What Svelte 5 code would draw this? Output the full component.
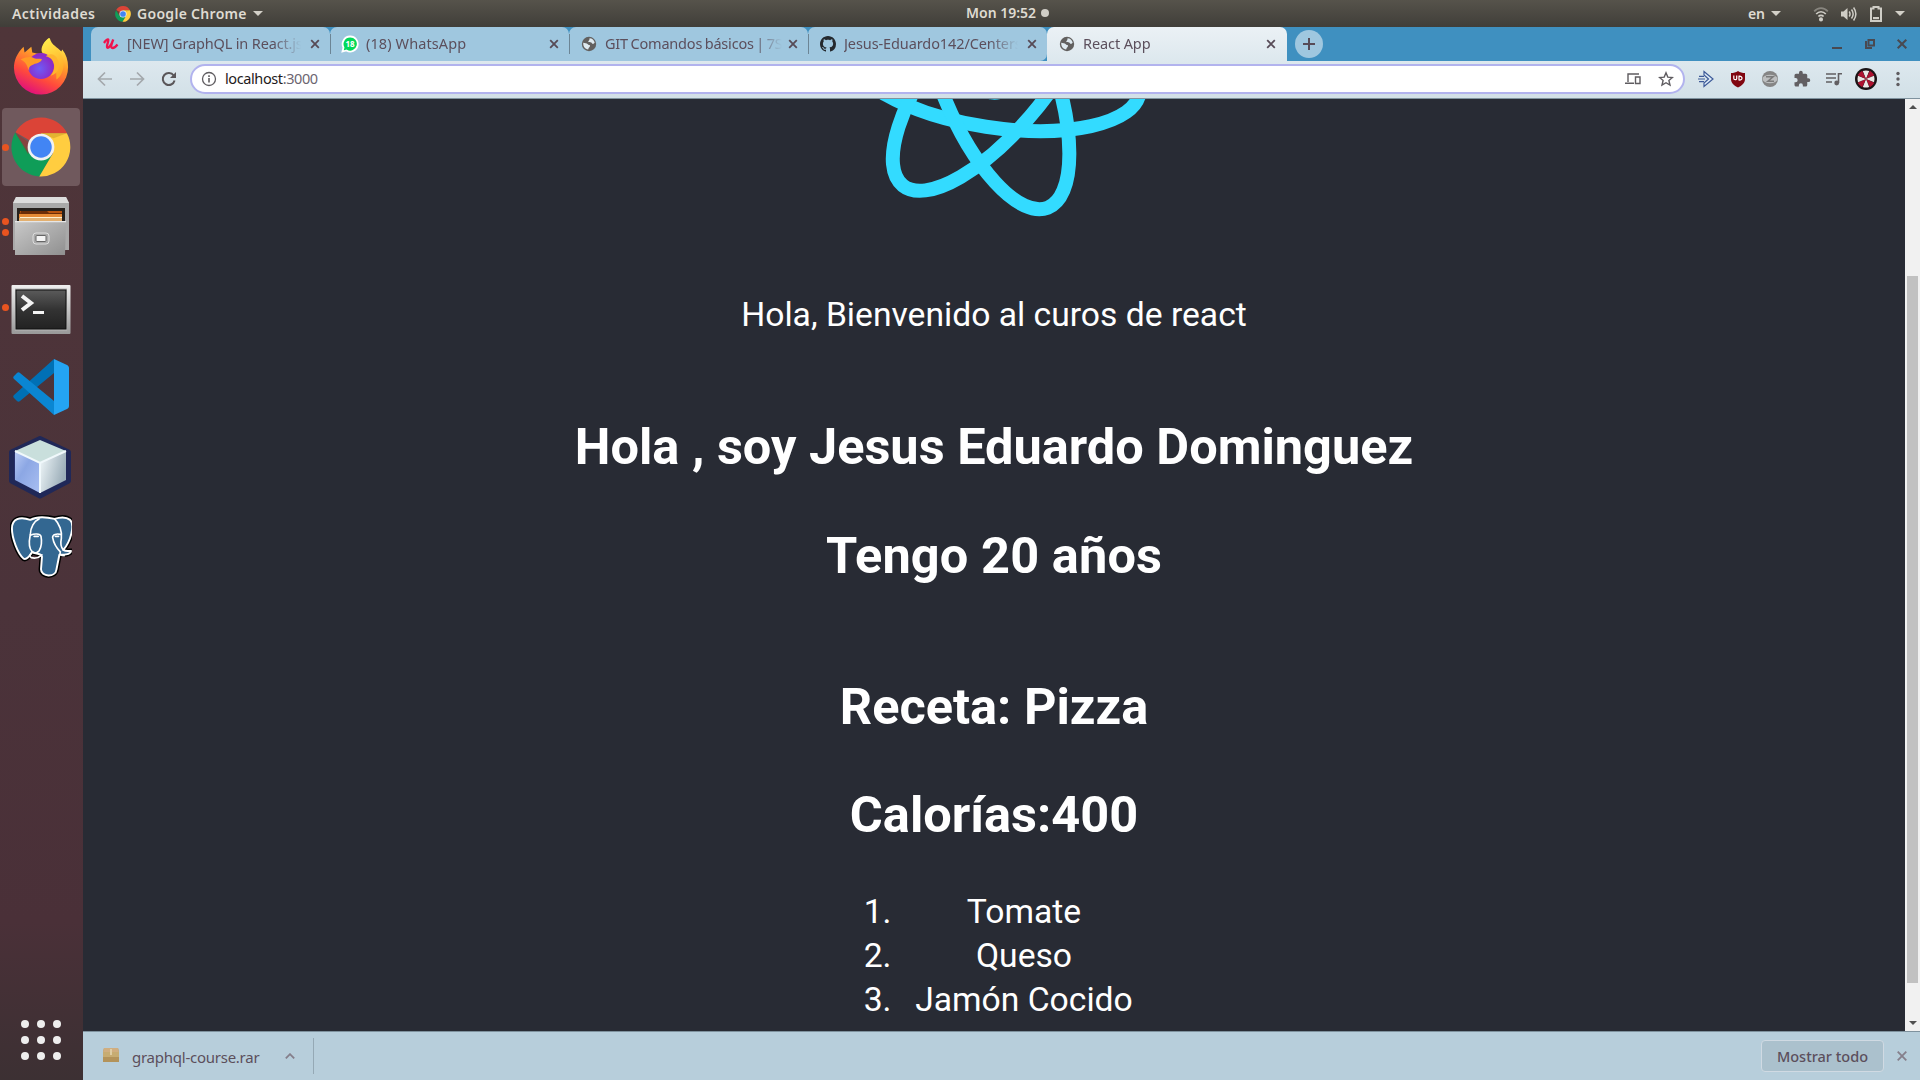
<script>
  const tabs = [
    { id: 'udemy', title: '[NEW] GraphQL in React.js', kind: 'udemy' },
    { id: 'wa', title: '(18) WhatsApp', kind: 'whatsapp' },
    { id: 'git', title: 'GIT Comandos básicos | 7Sabores', kind: 'globe' },
    { id: 'gh', title: 'Jesus-Eduardo142/Centers', kind: 'github' },
    { id: 'react', title: 'React App', kind: 'globe', active: true }
  ];
  const dock = [
    { name: 'firefox', dots: 0 },
    { name: 'chrome', dots: 1, current: true },
    { name: 'files', dots: 2 },
    { name: 'terminal', dots: 1 },
    { name: 'code', dots: 0 },
    { name: 'cube', dots: 0 },
    { name: 'postgres', dots: 0 }
  ];
  const ingredients = ['Tomate', 'Queso', 'Jamón Cocido'];
</script>

{#snippet chrome()}
  <path d="M24 24 3.6 12.2A23.5 23.5 0 0 1 44.9 13H24z" fill="#db4437" />
  <path d="M3.4 12.4A23.5 23.5 0 0 0 23 47.5l10-17.8L14.5 29z" fill="#0f9d58" />
  <path d="M44.7 13A23.5 23.5 0 0 1 22.6 47.5L33.6 29 24 13z" fill="#ffcd40" />
  <path d="M24 13h20.7L34 17z" fill="#c99b22" opacity=".5" />
  <path d="m3.4 12.4 10.2 17.4 1.6-9z" fill="#9e2e24" opacity=".5" />
  <circle cx="24" cy="24" r="10.7" fill="#f1f1f1" />
  <circle cx="24" cy="24" r="8.6" fill="#4285f4" />
{/snippet}

<div class="desktop">
  <header class="topbar">
    <span class="act">Actividades</span>
    <svg class="mini" viewBox="0 0 48 48">{@render chrome()}</svg>
    <span class="app">Google Chrome</span>
    <i class="tri"></i>
    <span class="clock">Mon 19:52<i></i></span>
    <div class="status">
      <span class="lang">en</span><i class="tri"></i>
      <svg class="wifi" width="16" height="16" viewBox="0 0 16 16" fill="none" stroke="#cfcdc6" stroke-width="1.7">
        <path d="M1.2 5.4C5 1 11 1 14.8 5.4" opacity=".45" /><path d="M3.2 8c2.8-3 6.800-3 9.600 0M5.400 10.500c1.500-1.600 3.700-1.600 5.200 0" />
        <circle cx="8" cy="13.4" r="1.2" fill="#cfcdc6" />
      </svg>
      <svg class="vol" width="17" height="16" viewBox="0 0 17 16" fill="none" stroke="#cfcdc6" stroke-width="1.5">
        <path d="M1 5.5h2.500L7.500 2v12L3.500 10.500H1z" fill="#cfcdc6" stroke="none" />
        <path d="M9.200 5.500c1 1.500 1 3.500 0 5M11.500 3.500c2 2.700 2 6.300 0 9M13.600 1.500c2.800 4 2.800 9 0 13" />
      </svg>
      <svg class="bat" width="14" height="18" viewBox="0 0 14 18"><path d="M2 3.500h2.500V2h5v1.500H12v12.500H2z" fill="none" stroke="#cfcdc6" stroke-width="2" /><path d="M4 12h6v2.200H4z" fill="#cfcdc6" /></svg>
      <i class="tri last"></i>
    </div>
  </header>

  <div class="body">
    <nav class="dock">
      {#each dock as d (d.name)}
        <div class="cell {d.name}" class:current={d.current}>
          {#if d.dots}<span class="run">{#each Array(d.dots) as _}<i></i>{/each}</span>{/if}
          {#if d.name === 'firefox'}
            <svg width="58" height="60" viewBox="0 0 60 60">
              <defs>
                <linearGradient id="ff" x1=".8" y1=".05" x2=".35" y2="1"><stop offset="0" stop-color="#fff44f" /><stop offset=".35" stop-color="#ffa02a" /><stop offset=".7" stop-color="#ff4a3c" /><stop offset="1" stop-color="#e0107c" /></linearGradient>
                <linearGradient id="ffy" x1="0" y1="0" x2=".3" y2="1"><stop offset="0" stop-color="#fff44f" /><stop offset="1" stop-color="#ffa726" /></linearGradient>
                <radialGradient id="ffp" cx=".45" cy=".6"><stop offset="0" stop-color="#6e5cf5" /><stop offset="1" stop-color="#8b2bc9" /></radialGradient>
              </defs>
              <path d="M2 32C2 24 5 17 12 10l1 6 7-6 1 6c5 1 8 2 11 1-2-6 2-13 7-16 2 8 8 9 12 14l1-2c4 5 6 11 6 18a28 28 0 0 1-56 1z" fill="url(#ff)" />
              <path d="M31 16c-2-6 3-12 7-15 2 8 9 9 12 16 7 11 2 23-4 27 0-12-1-24-15-28z" fill="url(#ffy)" />
              <circle cx="30" cy="30" r="13.500" fill="url(#ffp)" />
              <path d="M9 23c7-3 11-3 14-1 2 1 6 0 8 1-1 4-7 4-10 6-3 1-4 3-3 6-3-4-1-7-9-12z" fill="#ff9b26" />
              <path d="M35 20c10 2 11 14 5 20 9-2 11-12 6-19-3-4-8-4-11-1z" fill="#ffb52e" />
            </svg>
          {:else if d.name === 'chrome'}
            <svg width="60" height="60" viewBox="0 0 48 48">{@render chrome()}</svg>
          {:else if d.name === 'files'}
            <svg width="60" height="60" viewBox="0 0 60 60">
              <defs><linearGradient id="fl" x2="1" y2="1"><stop offset="0" stop-color="#c9c9c9" /><stop offset="1" stop-color="#8f8f8f" /></linearGradient></defs>
              <path d="M5 0h50l3 6v47H2V6z" fill="#a9a9a9" /><path d="M5 0h50l3 6H2z" fill="#dcdcdc" />
              <path d="M6 11h48v14H6z" fill="#26211d" />
              <path d="M9 14h42v10H8z" fill="#b9540f" /><path d="M10 14h26l2 2h13v1H9z" fill="#6b2c07" /><path d="M8 17h43v4H8z" fill="#e58a35" /><path d="M9 20h42v1H9z" fill="#fff0d0" /><path d="M8 21h43v3H8z" fill="#e3b070" />
              <path d="M4 24h51l-1 34H4z" fill="url(#fl)" /><path d="M4 24h51v1.200H4z" fill="#e6e6e6" />
              <rect x="22" y="36" width="16" height="11" rx="3" fill="#aaa" stroke="#ddd" /><rect x="25" y="38.500" width="10" height="6" rx="1" fill="#f4f4f4" stroke="#666" />
            </svg>
          {:else if d.name === 'terminal'}
            <svg width="60" height="60" viewBox="0 0 60 60">
              <defs><linearGradient id="tm" x2="0" y2="1"><stop offset="0" stop-color="#5b5b5b" /><stop offset=".5" stop-color="#333" /><stop offset="1" stop-color="#222" /></linearGradient><linearGradient id="tf" x2="0" y2="1"><stop offset="0" stop-color="#efefef" /><stop offset="1" stop-color="#999" /></linearGradient></defs>
              <rect x=".5" y="5" width="59" height="49" rx="1" fill="url(#tf)" /><rect x="4" y="8.500" width="52" height="42" fill="#b5b5b5" /><rect x="5" y="10" width="50" height="39" fill="url(#tm)" stroke="#111" />
              <path d="m11 16 9 7-9 7" fill="none" stroke="#f4f4f4" stroke-width="4" /><path d="M22 31h11v3H22z" fill="#f4f4f4" />
            </svg>
          {:else if d.name === 'code'}
            <svg width="60" height="60" viewBox="0 0 60 60">
              <path d="M43 2v14L9 44c-1 1-2 1-3 0l-3-3c-1-1-1-2 0-3z" fill="#0070b5" />
              <path d="M43 58V44L9 16c-1-1-2-1-3 0l-3 3c-1 1-1 2 0 3z" fill="#0a86d2" />
              <path d="m43 2 13 6c1 .5 2 1.500 2 3v38c0 1.500-1 2.500-2 3l-13 6z" fill="#24a4f3" />
            </svg>
          {:else if d.name === 'cube'}
            <svg width="64" height="64" viewBox="0 0 64 64">
              <defs><linearGradient id="cl" x2="1" y2="1"><stop offset="0" stop-color="#b9cbf5" /><stop offset=".4" stop-color="#8ca7e4" /><stop offset="1" stop-color="#a9bff2" /></linearGradient><linearGradient id="cr" x2="1" y2=".4"><stop offset="0" stop-color="#f3fafc" /><stop offset="1" stop-color="#9caeb9" /></linearGradient></defs>
              <path d="M31 3.500 59.500 17v29L31 61 2.500 46V17z" fill="#27306b" stroke="#202858" stroke-width="5" stroke-linejoin="round" />
              <path d="m31 5 26 11-26 12L6 16z" fill="#c9dfdc" /><path d="m6 16 25 12v30L6 45z" fill="url(#cl)" /><path d="m57 16-26 12v30l26-13z" fill="url(#cr)" />
              <path d="m6 16 25 12 26-12M31 28v30" fill="none" stroke="#f0f8fb" stroke-width="2" />
            </svg>
          {:else}
            <svg width="62" height="64" viewBox="0 0 64 66">
              <g stroke-linejoin="round" stroke-linecap="round">
                <path d="M21 5C10 1 2 4 2 14c0 10 6 26 12 31 4 2 7-4 9-7 5 3 9 1 10 5l-1 13c0 8 15 9 16 0l3-15c9 0 12-2 12-4-2 0-5 1-8-1 8-9 12-26 7-31-5-4-13-2-16-1C38 2 28 1 21 5z" fill="#336791" stroke="#000" stroke-width="5" />
                <path d="M21 5C10 1 2 4 2 14c0 10 6 26 12 31 4 2 7-4 9-7 5 3 9 1 10 5l-1 13c0 8 15 9 16 0l3-15c9 0 12-2 12-4-2 0-5 1-8-1 8-9 12-26 7-31-5-4-13-2-16-1C38 2 28 1 21 5z" fill="#336791" stroke="#fff" stroke-width="2" />
                <path d="M23 38c-5-5-3-13-2-18 0-7 4-14 9-16M21 21c4-2 10-2 11 1 1 5 1 10-2 15-2 2-5 3-7 1M23 38c-2 3-4 4-1 6 4 1 8 0 11-3M46 4c5 5 8 13 7 20-1 5-1 9 2 12M52 20c-4-1-8 0-8 3 1 6 4 11 8 15M52 38c-1 2 0 4 4 4" fill="none" stroke="#fff" stroke-width="1.700" />
                <path d="M25 22h4M47 22h3" stroke="#fff" stroke-width="2" />
              </g>
            </svg>
          {/if}
        </div>
      {/each}
      <div class="grid">{#each Array(9) as _}<i></i>{/each}</div>
    </nav>

    <section class="browser">
      <div class="tabs">
        <div class="strip">
          {#each tabs as t, i (t.id)}
            <div class="tab {t.id}" class:active={t.active} class:endtab={i === 3} class:sep={i > 0 && i < 4}>
              <span class="fav">
                {#if t.kind === 'udemy'}
                  <svg width="16" height="16" viewBox="0 0 16 16"><path d="M1 7C2.500 4.800 4.500 3 5.200 3.500c1 .8-2.200 6.500-1 8 1.400 1.500 4.300-3 6-8-1.400 4-2.800 7.500-1.500 8.300 1.500.6 4-1 5.800-3.300" fill="none" stroke="#f0134d" stroke-width="2.300" /></svg>
                {:else if t.kind === 'whatsapp'}
                  <svg width="18" height="18" viewBox="0 0 18 18"><path d="M9 1.500a7.500 7.500 0 1 1-3.500 14l-4 1 1-4A7.500 7.500 0 0 1 9 1.500z" fill="#00d95a" stroke="#fff" stroke-width="1.800" /></svg><b>18</b>
                {:else if t.kind === 'github'}
                  <svg width="16" height="16" viewBox="0 0 16 16"><path fill="#24292e" d="M8 0C3.580 0 0 3.580 0 8c0 3.540 2.290 6.530 5.470 7.590.4.070.55-.17.55-.38 0-.19-.01-.82-.01-1.490-2.010.37-2.530-.49-2.690-.94-.09-.23-.48-.94-.82-1.130-.28-.15-.68-.52-.01-.53.63-.01 1.080.58 1.230.82.72 1.210 1.870.87 2.330.66.07-.52.28-.87.51-1.070-1.780-.2-3.640-.89-3.640-3.950 0-.87.31-1.590.82-2.150-.08-.2-.36-1.020.08-2.120 0 0 .67-.21 2.200.82.64-.18 1.320-.27 2-.27s1.360.09 2 .27c1.530-1.040 2.200-.82 2.200-.82.44 1.100.16 1.920.08 2.120.51.56.82 1.270.82 2.150 0 3.070-1.870 3.750-3.650 3.950.29.25.54.73.54 1.480 0 1.070-.01 1.930-.01 2.200 0 .21.15.46.55.38A8.010 8.010 0 0 0 16 8c0-4.420-3.580-8-8-8z" /></svg>
                {:else}
                  <svg width="16" height="16" viewBox="0 0 16 16"><circle cx="8" cy="8" r="7.200" fill="#62605f" /><path d="M8.500 2.200c2.500 0 4.800 1.800 5.200 4.600-1 1.400-2.300 1.500-2.700.4-.8-1.500-2.300-.5-3.500-1.200-.8-1 1.300-1.400 1-3.800zM2.200 6.800c1.600.5 3.600.2 4.600 1.500.6 1 1.700.3 2.200 1.300.3 1.500-1.500 1.800-1.800 3.800-3 0-5.200-2.800-5-6.600z" fill="#dfeaf0" /></svg>
                {/if}
              </span>
              <span class="title">{t.title}</span>
              <svg class="x" width="10" height="10" viewBox="0 0 10 10"><path d="m1.200 1.200 7.600 7.600m0-7.600L1.200 8.800" stroke="#574b57" stroke-width="1.800" /></svg>
            </div>
          {/each}
        </div>
        <div class="plus"><svg width="12" height="12" viewBox="0 0 12 12"><path d="M6 0v12M0 6h12" stroke="#574b57" stroke-width="2" /></svg></div>
        <div class="win">
          <svg width="12" height="12" viewBox="0 0 12 12"><path d="M1 10h10" stroke="#494950" stroke-width="2" /></svg>
          <svg width="12" height="12" viewBox="0 0 12 12" fill="none" stroke="#494950" stroke-width="2"><path d="M4.500 2h5.500v5.500H4.500zM2 3v7h6" /></svg>
          <svg width="12" height="12" viewBox="0 0 12 12"><path d="m1.700 1.700 8.600 8.600m0-8.600-8.600 8.600" stroke="#494950" stroke-width="2" /></svg>
        </div>
      </div>

      <div class="toolbar">
        <div class="navs">
          <svg width="16" height="16" viewBox="0 0 16 16" fill="none" stroke="#a3a8ac" stroke-width="1.700"><path d="M15 8H2M8 1.500 1.500 8 8 14.500" /></svg>
          <svg width="16" height="16" viewBox="0 0 16 16" fill="none" stroke="#a3a8ac" stroke-width="1.700"><path d="M1 8h13M8 1.500 14.500 8 8 14.500" /></svg>
          <svg width="16" height="16" viewBox="0 0 16 16"><path d="M13.600 9.500a6 6 0 1 1-.9-5" fill="none" stroke="#5a5659" stroke-width="2" /><path d="M15 1v6H9z" fill="#5a5659" /></svg>
        </div>
        <div class="omni">
          <svg width="16" height="16" viewBox="0 0 16 16"><circle cx="8" cy="8" r="6.500" fill="none" stroke="#5f5c60" stroke-width="1.300" /><path d="M7.200 7h1.600v4.500H7.200zM7.200 4.300h1.600v1.600H7.200z" fill="#5f5c60" /></svg>
          <span class="url">localhost<em>:3000</em></span>
          <svg width="16" height="12" viewBox="0 0 16 12" fill="none" stroke="#5f5c60" stroke-width="1.400"><path d="M14 1H3v8M0 10.300h9M10.500 4h4.500v6.500h-4.500z" /></svg>
          <svg class="star" width="16" height="16" viewBox="0 0 16 16" fill="none" stroke="#5f5c60" stroke-width="1.400"><path d="m8 1.800 1.800 4.300 4.600.4-3.500 3 1.100 4.600L8 11.700l-4 2.400 1.100-4.600-3.500-3 4.600-.4z" /></svg>
        </div>
        <div class="exts">
          <svg width="18" height="18" viewBox="0 0 18 18"><path d="M7 1.500 16 9l-9 7.500V13l4.500-4L7 5z" fill="#dceaf7" stroke="#3d5a98" stroke-width="1.200" /><path d="M2 6.300h5M1 9h7M2 11.700h5" stroke="#3d5a98" stroke-width="1.200" /></svg>
          <span class="ub"><svg width="16" height="18" viewBox="0 0 16 18"><path d="M8 1c2 1.400 4.500 2 7 2v6c0 4-3 6.500-7 8.500C4 15.500 1 13 1 9V3c2.500 0 5-.6 7-2z" fill="#800610" /><path d="M3.800 5.500v3c0 1.600 2.900 1.600 2.900 0v-3M9 10c4 .6 4-4.300 0-3.800z" fill="none" stroke="#fff" stroke-width="1.200" /></svg></span>
          <svg width="18" height="18" viewBox="0 0 18 18"><circle cx="9" cy="9" r="8" fill="#858585" /><ellipse cx="9" cy="9" rx="7.500" ry="4.200" fill="#bcbebf" /><path d="M5 6.800h7l-5 4.400h6" fill="none" stroke="#7b7b7b" stroke-width="1.600" /></svg>
          <svg width="18" height="18" viewBox="0 0 24 24"><path fill="#625f62" d="M20.500 11H19V7a2 2 0 0 0-2-2h-4V3.500a2.500 2.500 0 0 0-5 0V5H4a2 2 0 0 0-2 2v3.800h1.500a2.700 2.700 0 0 1 0 5.400H2V20c0 1.100.9 2 2 2h3.800v-1.500a2.700 2.700 0 0 1 5.400 0V22H17a2 2 0 0 0 2-2v-4h1.500a2.500 2.500 0 0 0 0-5z" /></svg>
          <svg width="18" height="18" viewBox="0 0 18 18"><path d="M1 4h10M1 8h10M1 12h6M13.500 13V3.800H17" fill="none" stroke="#625f62" stroke-width="1.600" /><circle cx="11.700" cy="13" r="2.400" fill="#625f62" /></svg>
          <svg class="ava" width="22" height="22" viewBox="-11 -11 22 22"><circle r="11" fill="#1b1416" />{#each [0, 90, 180, 270] as a}<path transform="rotate({a})" d="M0 0-3.200-8Q0-9 3.200-8z" fill="#ece8e6" /><path transform="rotate({a + 45})" d="M0 0-3.200-8.600Q0-9.500 3.200-8.600z" fill="#ae1230" />{/each}</svg>
          <svg width="4" height="16" viewBox="0 0 4 16" fill="#5f5c60"><circle cx="2" cy="2.500" r="1.700" /><circle cx="2" cy="8" r="1.700" /><circle cx="2" cy="13.500" r="1.700" /></svg>
        </div>
      </div>

      <div class="view">
        <main class="page">
          <svg class="logo" width="527" height="187" viewBox="-263.500 28 527 187">
            <g transform="rotate(8.700) scale(.6268)" fill="none" stroke="#33dbff" stroke-width="22.300">
              {#each [0, 60, 120] as a}<ellipse rx="234" ry="90" transform="rotate({a})" />{/each}
              <circle r="45.700" fill="#33dbff" stroke="none" />
            </g>
          </svg>
          <p>Hola, Bienvenido al curos de react</p>
          <h2 class="top">Hola , soy Jesus Eduardo Dominguez</h2>
          <h2 class="age">Tengo 20 años</h2>
          <h2>Receta: Pizza</h2>
          <h2>Calorías:400</h2>
          <ol>{#each ingredients as item, i}<li><span>{i + 1}.</span><span class="ing">{item}</span></li>{/each}</ol>
        </main>
        <div class="scroll">
          <i class="up"></i>
          <div class="track"><div class="thumb"></div></div>
          <i class="down"></i>
        </div>
      </div>

      <footer class="shelf">
        <svg width="16" height="14" viewBox="0 0 16 14"><path d="M1 0h14l1 4v10H0V4z" fill="#b3935a" /><path d="M1 0h14l1 4H0z" fill="#d0ae80" /><path d="M0 4h16v5H0z" fill="#c7ac72" /><path d="M7 1h2v6H7z" fill="#dfcda4" /></svg>
        <span class="file">graphql-course.rar</span>
        <svg class="chev" width="10" height="6" viewBox="0 0 10 6"><path d="m.8 5.400 4.200-4.200 4.200 4.200" fill="none" stroke="#857f8b" stroke-width="1.800" /></svg>
        <i class="line"></i>
        <button>Mostrar todo</button>
        <svg class="cx" width="10" height="10" viewBox="0 0 10 10"><path d="m.7.7 8.600 8.600m0-8.600L.7 9.300" stroke="#857f8b" stroke-width="1.800" /></svg>
      </footer>
    </section>
  </div>
</div>

<style>
  :global(body) { overflow: hidden; }
  * { box-sizing: border-box; }
  svg { display: block; flex: none; }
  .desktop { width: 1920px; height: 1080px; display: flex; flex-direction: column; font-family: "Noto Sans", "Open Sans", sans-serif; }
  .topbar { height: 27px; flex: none; display: flex; align-items: center; position: relative; padding: 0 15px 0 12px; background: linear-gradient(#56534b, #403e39); color: #dfdbd2; font-size: 14px; font-weight: 600; white-space: nowrap; }
  .act { width: 103px; letter-spacing: .45px; }
  .mini { width: 16px; height: 16px; margin-right: 6px; }
  .app { width: 116px; letter-spacing: .3px; }
  .tri { width: 0; height: 0; border: 5px solid transparent; border-top-color: #d3d0c8; border-bottom: 0; }
  .clock { position: absolute; left: 966px; top: 3px; display: flex; align-items: center; gap: 5px; }
  .clock i { width: 8px; height: 8px; border-radius: 50%; background: #cfcdc6; }
  .status { margin-left: auto; display: flex; align-items: center; }
  .lang { margin-right: 6px; }
  .wifi { margin-left: 32px; }
  .vol { margin-left: 11px; }
  .bat { margin-left: 12px; }
  .last { margin-left: 12px; }

  .body { flex: 1; display: flex; min-height: 0; }
  .dock { width: 83px; flex: none; display: flex; flex-direction: column; gap: 2px; padding: 1px 3px 0 2px; background: linear-gradient(#4f3539, #4b333a 55%, #4a3038 85%, #3c3033); }
  .cell { height: 78px; flex: none; display: flex; align-items: center; justify-content: center; border-radius: 4px; position: relative; }
  .cell.current { background: #70595d; }
  .cell.firefox { padding-bottom: 2px; }
  .cell.terminal svg { margin-top: 6px; }
  .run { position: absolute; left: 0; display: flex; flex-direction: column; gap: 4px; }
  .run i { width: 7px; height: 7px; border-radius: 50%; background: #e95420; }
  .grid { margin: auto auto 20px; display: grid; grid-template-columns: repeat(3, 8px); gap: 8px; }
  .grid i { height: 8px; border-radius: 50%; background: #eee; }

  .browser { flex: 1; min-width: 0; display: flex; flex-direction: column; }
  .tabs { height: 34px; flex: none; display: flex; align-items: center; background: #3f90c0; padding-left: 8px; }
  .strip { display: flex; height: 34px; }
  .tab { width: 239px; height: 34px; display: flex; align-items: center; padding: 0 10px 0 11px; background: #9fc7df; border-radius: 7px 7px 0 0; position: relative; color: #5c4f5c; }
  .tab.endtab { border-bottom-right-radius: 7px; }
  .tab.active { width: 240px; padding-right: 11px; background: linear-gradient(#ebf1f5, #dde8ee); }
  .tab.sep::before { content: ""; position: absolute; left: 0; top: 7px; width: 1px; height: 20px; background: #6c8595; }
  .fav { width: 18px; height: 18px; margin-right: 7px; display: flex; align-items: center; justify-content: center; position: relative; }
  .fav b { position: absolute; inset: 0; text-align: center; line-height: 17px; font-size: 8px; color: #fff; }
  .title { flex: 1; min-width: 0; overflow: hidden; white-space: nowrap; font-size: 14.500px; letter-spacing: -.1px; margin: 0 9px 2px 0; mask-image: linear-gradient(90deg, #000 84%, transparent); }
  .tab.udemy .title { letter-spacing: -.15px; }
  .tab.git .title { letter-spacing: -.2px; word-spacing: -1px; margin-right: 6px; }
  .tab.wa .title { letter-spacing: .1px; }
  .plus { width: 28px; height: 28px; border-radius: 50%; background: #9fc7df; margin-left: 8px; display: flex; align-items: center; justify-content: center; }
  .win { margin-left: auto; display: flex; gap: 20.500px; padding-right: 12px; }

  .toolbar { height: 38px; flex: none; display: flex; align-items: center; padding: 0 19px 2px 14px; background: linear-gradient(#dde8ee, #d2e0e7); border-bottom: 1px solid #7f929e; }
  .navs { display: flex; gap: 16px; width: 93px; }
  .omni { width: 1495px; height: 30px; border: 2px solid #b2b3ee; border-radius: 15px; background: #fff; display: flex; align-items: center; padding: 0 9px; }
  .url { flex: 1; margin: 0 0 1px 8px; font-size: 14.500px; color: #1e1a20; letter-spacing: -.4px; }
  .url em { font-style: normal; color: #6b6570; }
  .star { margin-left: 17px; }
  .exts { margin-left: 12px; display: flex; align-items: center; gap: 14px; }
  .ub { width: 18px; display: flex; justify-content: center; }
  .ava { margin: 0 -2px; }
  .exts > :last-child { margin-left: 7px; }

  .view { flex: 1; min-height: 0; display: flex; background: #282b34; }
  .page { width: 1822px; overflow: hidden; display: flex; flex-direction: column; align-items: center; color: #fff; font-family: Roboto, sans-serif; font-size: 33.660px; line-height: 44px; }
  .logo { height: 187px; margin-bottom: -28px; }
  p { margin: 35px 0 0; }
  h2 { margin: 0 0 42px; font-size: 50.500px; line-height: 66px; font-weight: 700; }
  .top { margin: 77px 0 43px; }
  .age { margin-bottom: 85px; letter-spacing: .1px; }
  ol { list-style: none; margin: 0; padding: 0; }
  li { display: grid; grid-template-columns: 60px auto; text-align: center; }
  li span:first-child { text-align: left; padding-left: 8.500px; }
  .scroll { flex: 1; background: #f1f1f1; display: flex; flex-direction: column; align-items: center; padding: 6px 0; }
  .up, .down { width: 0; height: 0; border: 4px solid transparent; }
  .up { border-bottom-color: #505050; border-top: 0; }
  .down { border-top-color: #505050; border-bottom: 0; }
  .track { flex: 1; width: 11px; padding-top: 167px; }
  .thumb { height: 707px; background: #c1c1c1; }

  .shelf { height: 49px; flex: none; display: flex; align-items: center; background: #b7cedb; border-top: 1px solid #7f929e; padding: 0 13px 0 20px; color: #5c4f5c; font-size: 15px; }
  .shelf > svg:first-child { margin-bottom: 2px; }
  .file { margin-left: 13px; width: 153px; white-space: nowrap; padding-top: 2px; letter-spacing: -.25px; }
  .line { width: 1px; height: 36px; background: #95a9b5; margin-left: 18px; }
  button { margin-left: auto; width: 123px; height: 32px; margin-bottom: 1px; padding: 0; border: 1px solid #d0dae3; border-radius: 4px; background: #abc1cd; color: #5c4f5c; font: 500 14.500px "Noto Sans", sans-serif; }
  .cx { margin-left: 13px; }
</style>
